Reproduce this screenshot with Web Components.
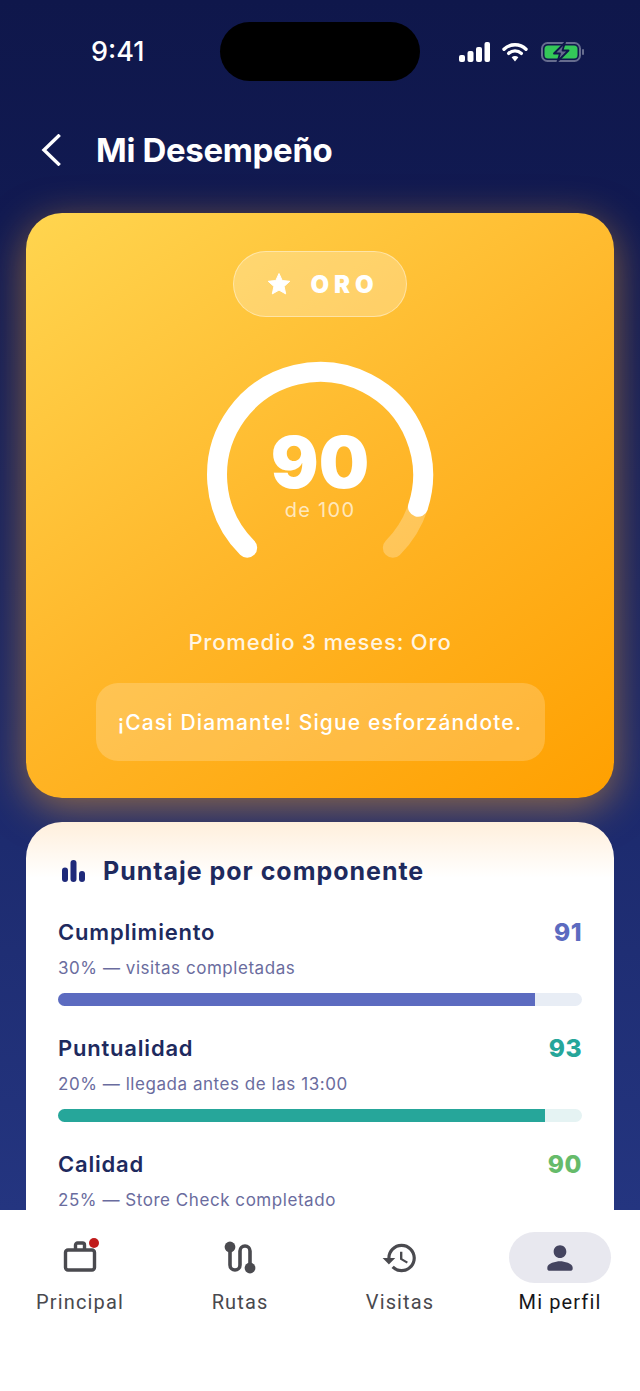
<!DOCTYPE html>
<html lang="es">
<head>
<meta charset="utf-8">
<title>Mi Desempeño</title>
<style>
  html, body { margin: 0; padding: 0; }
  body { font-family: Inter, "Liberation Sans", sans-serif; }
</style>
</head>
<body>
<perf-app>
  <status-bar slot="top"></status-bar>
  <page-header slot="top" title="Mi Desempeño"></page-header>
  <score-card slot="top" level="ORO" score="90" average="Promedio 3 meses: Oro" message="¡Casi Diamante! Sigue esforzándote."></score-card>
  <breakdown-card slot="top" heading="Puntaje por componente">
    <score-row name="Cumplimiento" value="91" note="30% — visitas completadas" color="#5c6bc0" track="#e8edf5"></score-row>
    <score-row name="Puntualidad" value="93" note="20% — llegada antes de las 13:00" color="#26a69a" track="#e5f3f3"></score-row>
    <score-row name="Calidad" value="90" note="25% — Store Check completado" color="#66bb6a" track="#e8f5e9"></score-row>
  </breakdown-card>
  <bottom-nav slot="nav"></bottom-nav>
</perf-app>

<script>
class PerfApp extends HTMLElement {
  connectedCallback() {
    this.attachShadow({ mode: "open" });
    this.shadowRoot.innerHTML = `
      <style>
        :host { display: flex; flex-direction: column; width: 640px; height: 1391px; overflow: hidden; background: #fff; }
        .screen {
          height: 1210px;
          flex: none;
          overflow: hidden;
          background: linear-gradient(180deg, #0f174b 0%, #111a52 18%, #243580 100%);
        }
      </style>
      <div class="screen"><slot name="top"></slot></div>
      <slot name="nav"></slot>
    `;
  }
}

class StatusBar extends HTMLElement {
  connectedCallback() {
    this.attachShadow({ mode: "open" });
    this.shadowRoot.innerHTML = `
      <style>
        :host { display: grid; grid-template-columns: 220px 200px 220px; height: 82px; padding-top: 22px; box-sizing: border-box; color: #fff; }
        .time { font-size: 27px; font-weight: 500; padding: 15px 0 0 91px; line-height: 30px; }
        .island { height: 59px; background: #000; border-radius: 30px; }
        .icons { display: flex; align-items: flex-start; gap: 12px; padding: 20px 0 0 39px; }
        svg { display: block; }
      </style>
      <div class="time">9:41</div>
      <div class="island"></div>
      <div class="icons">
        <svg width="31" height="20" viewBox="0 0 31 20" fill="#fff">
          <rect x="0" y="13" width="6" height="7" rx="2"/>
          <rect x="8.500" y="9" width="6" height="11" rx="2"/>
          <rect x="17" y="5" width="6" height="15" rx="2"/>
          <rect x="25.500" y="0" width="5.500" height="20" rx="2"/>
        </svg>
        <svg width="26" height="20" viewBox="0 0 26 20" fill="none" stroke="#fff" stroke-width="3.400" stroke-linecap="round">
          <path d="M2 7.200C8 1.200 18 1.200 24 7.200"/>
          <path d="M6.700 11.400C10.200 8 15.800 8 19.300 11.400"/>
          <path d="M13 19.400l-3.400-4.200c2-1.600 4.800-1.600 6.800 0z" fill="#fff" stroke="none"/>
        </svg>
        <svg width="44" height="20" viewBox="0 0 44 20" style="margin-left:1px">
          <rect x="1" y="1" width="38" height="18" rx="5.500" fill="none" stroke="#666c8e" stroke-width="2"/>
          <rect x="3.500" y="3.500" width="33" height="13" rx="3.500" fill="#34c759"/>
          <rect x="41" y="7" width="2" height="6" rx="1" fill="#666c8e"/>
          <path d="M24 0.500L13 11.500h6L16.500 19.500 27.500 8.500h-6z" fill="#666c8e" stroke="#0f174b" stroke-width="1.800" stroke-linejoin="round"/>
        </svg>
      </div>
    `;
  }
}

class PageHeader extends HTMLElement {
  connectedCallback() {
    this.attachShadow({ mode: "open" });
    this.shadowRoot.innerHTML = `
      <style>
        :host { display: flex; align-items: center; gap: 35px; height: 72px; margin-top: 32px; padding-left: 41px; color: #fff; }
        h1 { margin: 0; font-size: 33px; font-weight: 650; letter-spacing: -0.33px; line-height: 40px; }
        svg { display: block; }
      </style>
      <svg width="20" height="32" viewBox="0 0 20 32" fill="none" stroke="#fff" stroke-width="3.400" stroke-linecap="square">
        <path d="M17.500 2L3 16l14.500 14"/>
      </svg>
      <h1>${this.getAttribute("title")}</h1>
    `;
  }
}

class ScoreCard extends HTMLElement {
  connectedCallback() {
    this.attachShadow({ mode: "open" });
    this.shadowRoot.innerHTML = `
      <style>
        :host {
          display: flex; flex-direction: column; align-items: center;
          box-sizing: border-box; width: 588px; height: 585px;
          margin: 27px 26px 0; padding-top: 38px;
          border-radius: 36px; color: #fff;
          background: linear-gradient(145deg, #ffd54f 0%, #ffb72a 50%, #ffa000 100%);
          box-shadow: 0 10px 40px rgba(255, 167, 38, 0.5);
        }
        .badge {
          display: flex; align-items: center; justify-content: center; gap: 20px;
          box-sizing: border-box; width: 174px; height: 66px; padding-left: 5px; border-radius: 33px;
          background: rgba(255,255,255,.25); border: 1.500px solid rgba(255,255,255,.4);
          font-size: 24px; font-weight: 900; letter-spacing: 4.900px;
        }
        .gauge { position: relative; width: 240px; height: 240px; margin-top: 41px; }
        .gauge svg { display: block; }
        .center { position: absolute; inset: 0; display: flex; flex-direction: column; align-items: center; padding-top: 72px; box-sizing: border-box; }
        .score { font-size: 71px; font-weight: 900; line-height: 64px; }
        .of { font-size: 20px; line-height: 24px; color: rgba(255,255,255,.7); letter-spacing: 1.300px; margin-top: 4px; }
        .avg { margin-top: 30px; font-size: 22px; line-height: 28px; font-weight: 500; color: rgba(255,255,255,.88); letter-spacing: .83px; }
        .msg {
          display: flex; align-items: center; justify-content: center;
          box-sizing: border-box; width: 449px; height: 78px; margin-top: 27px;
          border-radius: 22px; background: rgba(255,255,255,.2);
          font-size: 21px; font-weight: 500; letter-spacing: 1.140px;
        }
      </style>
      <div class="badge">
        <svg width="24" height="24" viewBox="0 0 24 24" fill="#fff"><path d="M12 1.500l3.200 7 7.600.8-5.700 5.100 1.600 7.500L12 18.100l-6.700 3.800 1.600-7.500L1.200 9.300l7.600-.8z" stroke="#fff" stroke-width="1" stroke-linejoin="round"/></svg>
        <span>${this.getAttribute("level")}</span>
      </div>
      <div class="gauge">
        <svg width="240" height="240" viewBox="0 0 240 240" fill="none" stroke-width="20" stroke-linecap="round">
          <path d="M218 148.800A103 103 0 0 1 192.800 189.800" stroke="rgba(255,255,255,.25)"/>
          <path d="M47.200 189.800A103 103 0 1 1 218 148.800" stroke="#fff"/>
        </svg>
        <div class="center">
          <div class="score">${this.getAttribute("score")}</div>
          <div class="of">de 100</div>
        </div>
      </div>
      <div class="avg">${this.getAttribute("average")}</div>
      <div class="msg">${this.getAttribute("message")}</div>
    `;
  }
}

class BreakdownCard extends HTMLElement {
  connectedCallback() {
    this.attachShadow({ mode: "open" });
    this.shadowRoot.innerHTML = `
      <style>
        :host {
          display: block; box-sizing: border-box; width: 588px;
          margin: 24px 26px 0; padding: 32px 32px 32px;
          border-radius: 36px 36px 0 0; color: #1e2a5e;
          background: linear-gradient(180deg, #ffefdc 0%, #fff 56px);
        }
        .title { display: flex; align-items: center; gap: 18px; height: 34px; margin-bottom: 29px; padding-left: 4px; }
        h2 { margin: 0; font-size: 25px; font-weight: 700; letter-spacing: .98px; }
        svg { display: block; }
      </style>
      <div class="title">
        <svg width="23" height="22" viewBox="0 0 23 22" fill="#1f2a7a">
          <rect x="0" y="7.500" width="6" height="14.500" rx="3"/>
          <rect x="8.500" y="0" width="6" height="22" rx="3"/>
          <rect x="17" y="11" width="6" height="11" rx="3"/>
        </svg>
        <h2>${this.getAttribute("heading")}</h2>
      </div>
      <slot></slot>
    `;
  }
}

class ScoreRow extends HTMLElement {
  connectedCallback() {
    const value = Number(this.getAttribute("value"));
    const color = this.getAttribute("color");
    this.attachShadow({ mode: "open" });
    this.shadowRoot.innerHTML = `
      <style>
        :host { display: block; height: 116px; }
        .top { display: flex; justify-content: space-between; align-items: center; height: 30px; }
        .name { font-size: 22px; font-weight: 560; letter-spacing: .8px; }
        .value { font-size: 24.500px; font-weight: 800; letter-spacing: .5px; color: ${color}; }
        .note { margin-top: 10px; height: 22px; line-height: 22px; font-size: 17px; letter-spacing: .55px; color: #6a6c9e; }
        .bar { height: 13px; margin-top: 14px; border-radius: 7px; overflow: hidden; background: ${this.getAttribute("track")}; }
        .fill { height: 100%; width: ${value}%; background: ${color}; }
      </style>
      <div class="top"><span class="name">${this.getAttribute("name")}</span><span class="value">${value}</span></div>
      <div class="note">${this.getAttribute("note")}</div>
      <div class="bar"><div class="fill"></div></div>
    `;
  }
}

class BottomNav extends HTMLElement {
  connectedCallback() {
    const items = [
      { label: "Principal", dot: true, icon: `<svg width="36" height="36" viewBox="0 0 36 36" fill="none" stroke="#4a4a4f" stroke-width="3.400" stroke-linejoin="round"><rect x="3.500" y="10" width="29" height="20" rx="2.500"/><path d="M13.500 10V5a2 2 0 0 1 2-2h5a2 2 0 0 1 2 2v5"/></svg>` },
      { label: "Rutas", icon: `<svg width="36" height="36" viewBox="0 0 36 36" fill="none" stroke="#4a4a4f" stroke-width="3.600" stroke-linecap="round"><path d="M8 7V25a5 5 0 0 0 10 0V11a5 5 0 0 1 10 0V28"/><circle cx="8" cy="7" r="5.400" fill="#4a4a4f" stroke="none"/><circle cx="28" cy="28" r="5.400" fill="#4a4a4f" stroke="none"/></svg>` },
      { label: "Visitas", icon: `<svg width="38" height="38" viewBox="0 0 24 24" fill="#4a4a4f"><path d="M13 3c-4.970 0-9 4.030-9 9H1l3.890 3.890.07.140L9 12H6c0-3.870 3.130-7 7-7s7 3.130 7 7-3.130 7-7 7c-1.930 0-3.680-.790-4.940-2.060l-1.420 1.420C8.270 19.990 10.510 21 13 21c4.970 0 9-4.030 9-9s-4.030-9-9-9zm-1 5v5l4.280 2.540.720-1.210-3.500-2.080V8H12z"/></svg>` },
      { label: "Mi perfil", active: true, icon: `<svg width="38" height="38" viewBox="0 0 24 24" fill="#44445f"><path d="M12 12c2.210 0 4-1.790 4-4s-1.790-4-4-4-4 1.790-4 4 1.790 4 4 4zm0 2c-2.670 0-8 1.340-8 4v1c0 .550.450 1 1 1h14c.550 0 1-.450 1-1v-1c0-2.660-5.330-4-8-4z"/></svg>` },
    ];
    this.attachShadow({ mode: "open" });
    this.shadowRoot.innerHTML = `
      <style>
        :host { display: grid; grid-template-columns: repeat(4, 160px); height: 181px; padding-top: 22px; box-sizing: border-box; background: #fff; }
        .item { display: flex; flex-direction: column; align-items: center; font-family: Roboto, "Liberation Sans", sans-serif; font-size: 20px; letter-spacing: 1.130px; color: #49494e; }
        .icon { position: relative; display: flex; align-items: center; justify-content: center; width: 102px; height: 51px; border-radius: 26px; }
        .active .icon { background: #e8e8ef; }
        .active { color: #16161a; }
        .label { margin-top: 6px; line-height: 26px; }
        .dot { position: absolute; top: 6px; left: 60px; width: 10px; height: 10px; border-radius: 50%; background: #c01c1c; }
        svg { display: block; }
      </style>
      ${items.map((item) => `
        <div class="item ${item.active ? "active" : ""}">
          <div class="icon">${item.icon}${item.dot ? `<span class="dot"></span>` : ""}</div>
          <div class="label">${item.label}</div>
        </div>
      `).join("")}
    `;
  }
}

customElements.define("perf-app", PerfApp);
customElements.define("status-bar", StatusBar);
customElements.define("page-header", PageHeader);
customElements.define("score-card", ScoreCard);
customElements.define("breakdown-card", BreakdownCard);
customElements.define("score-row", ScoreRow);
customElements.define("bottom-nav", BottomNav);
</script>
</body>
</html>
